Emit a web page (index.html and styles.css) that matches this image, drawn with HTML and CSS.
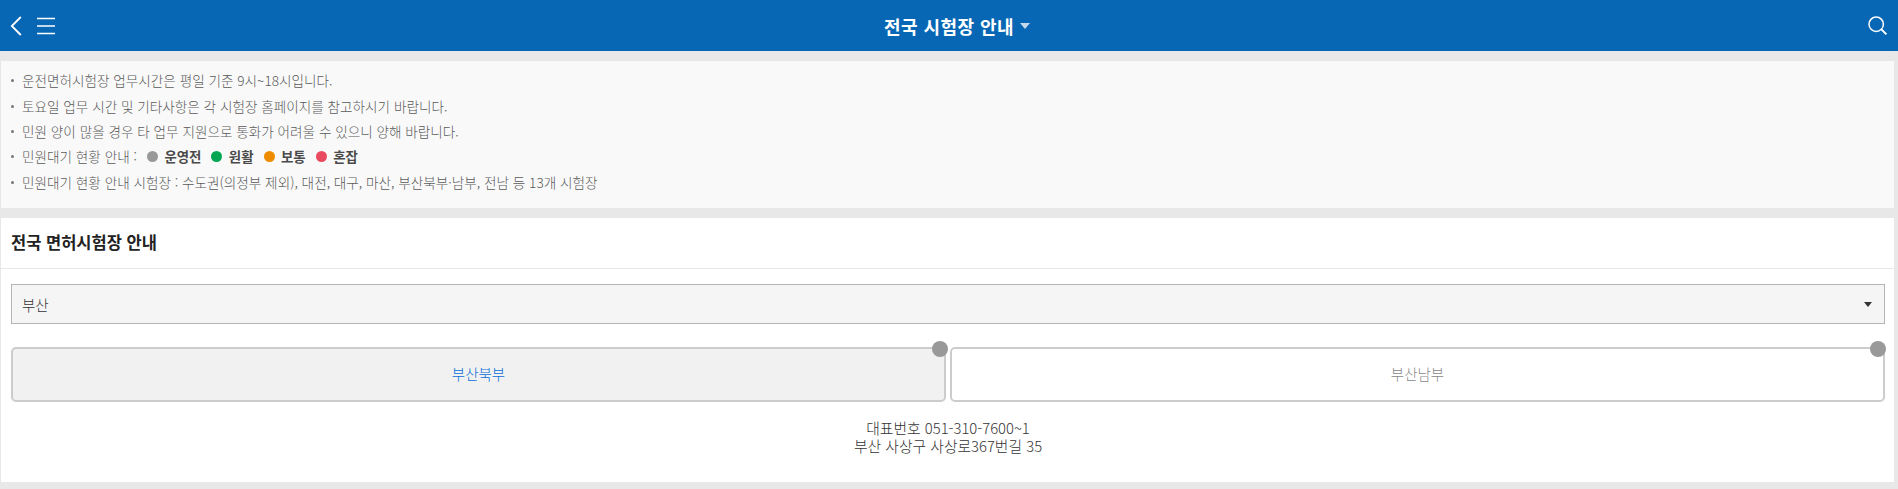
FILE: index.html
```html
<!DOCTYPE html>
<html lang="ko">
<head>
<meta charset="utf-8">
<title>전국 시험장 안내</title>
<link rel="stylesheet" href="styles.css">
</head>
<body>
<header class="topbar">
  <div class="topbar-left">
    <svg class="ico-back" width="12" height="20" viewBox="0 0 12 20"><path d="M10.8 1 1.8 10l9 9" fill="none" stroke="#fff" stroke-width="1.8"/></svg>
    <svg class="ico-menu" width="18" height="18" viewBox="0 0 18 18"><path d="M0 1.5h18M0 9h18M0 16.5h18" fill="none" stroke="#fff" stroke-width="1.5"/></svg>
  </div>
  <h1 class="topbar-title">전국 시험장 안내<span class="caret"></span></h1>
  <svg class="ico-search" width="20" height="20" viewBox="0 0 20 20"><circle cx="8.2" cy="8.2" r="7.2" fill="none" stroke="#fff" stroke-width="1.5"/><path d="m13.4 13.4 5 5" fill="none" stroke="#fff" stroke-width="2"/></svg>
</header>
<section class="notice">
  <ul>
    <li><span>운전면허시험장 업무시간은 평일 기준 9시~18시입니다.</span></li>
    <li><span>토요일 업무 시간 및 기타사항은 각 시험장 홈페이지를 참고하시기 바랍니다.</span></li>
    <li><span>민원 양이 많을 경우 타 업무 지원으로 통화가 어려울 수 있으니 양해 바랍니다.</span></li>
    <li><span>민원대기 현황 안내 :</span>
      <span class="legend"><i class="dot gray"></i><b>운영전</b></span>
      <span class="legend"><i class="dot green"></i><b>원활</b></span>
      <span class="legend"><i class="dot orange"></i><b>보통</b></span>
      <span class="legend"><i class="dot red"></i><b>혼잡</b></span>
    </li>
    <li><span>민원대기 현황 안내 시험장 : 수도권(의정부 제외), 대전, 대구, 마산, 부산북부·남부, 전남 등 13개 시험장</span></li>
  </ul>
</section>
<main class="panel">
  <h2 class="panel-title">전국 면허시험장 안내</h2>
  <div class="panel-body">
    <div class="select"><span>부산</span><i class="select-arrow"></i></div>
    <div class="tabs">
      <div class="tab active">부산북부<i class="status"></i></div>
      <div class="tab">부산남부<i class="status"></i></div>
    </div>
    <p class="info">대표번호 051-310-7600~1<br>부산 사상구 사상로367번길 35</p>
  </div>
</main>
</body>
</html>
```
FILE: styles.css
```css
* { box-sizing: border-box; }
html, body { margin: 0; height: 489px; overflow: hidden; }
body {
  background: #e8e8e8;
  font-family: "Noto Sans CJK KR", "Noto Sans", sans-serif;
  color: #555;
  padding: 0 4px 0 1px;
}
.topbar {
  height: 51px;
  margin: 0 -4px 0 -1px;
  background: #0767b5;
  display: grid;
  grid-template-columns: 1fr auto 1fr;
  align-items: center;
  padding: 0 10px 0 10px;
}
.topbar-left { display: flex; align-items: center; gap: 15px; }
.topbar-title {
  margin: 0;
  padding-left: 16px;
  font-size: 18px;
  font-weight: 700;
  color: #fff;
  letter-spacing: 0.45px;
  display: flex;
  align-items: center;
}
.caret {
  margin-left: 6px;
  border-left: 5px solid transparent;
  border-right: 5px solid transparent;
  border-top: 6px solid #c6d9ea;
}
.ico-search { justify-self: end; }
.notice {
  margin-top: 10px;
  height: 147px;
  background: #f9f9f9;
  padding: 7px 10px 0;
  font-size: 13.6px;
  font-weight: 300;
  color: #5a5a5a;
}
.notice ul { margin: 0; padding: 0; list-style: none; }
.notice li { height: 25.4px; line-height: 25px; display: flex; align-items: center; }
.notice li::before {
  content: "";
  width: 3px; height: 3px;
  border-radius: 50%;
  background: #777;
  margin-right: 8px;
  flex: none;
}
.legend { display: inline-flex; align-items: center; margin-left: 10px; color: #4a4a4a; }
.legend b { font-weight: 700; font-size: 13.4px; }
.dot { width: 11px; height: 11px; border-radius: 50%; margin-right: 6.5px; }
.gray { background: #999; }
.green { background: #00a651; }
.orange { background: #ee8c00; }
.red { background: #e84a5f; }
.panel { margin-top: 10px; height: 264px; background: #fff; }
.panel-title {
  margin: 0;
  height: 51px;
  line-height: 49px;
  padding-left: 10px;
  font-size: 16.5px;
  font-weight: 700;
  color: #222;
  border-bottom: 1px solid #e8e8e8;
}
.panel-body { padding: 15px 9px 0 10px; }
.select {
  height: 40px;
  border: 1px solid #b5b5b5;
  background: #f5f5f5;
  display: flex;
  align-items: center;
  justify-content: space-between;
  padding: 0 12px 0 10px;
  font-size: 14.5px;
  font-weight: 300;
  color: #333;
}
.select-arrow {
  border-left: 4px solid transparent;
  border-right: 4px solid transparent;
  border-top: 5px solid #333;
}
.tabs { display: flex; gap: 4px; margin-top: 23px; }
.tab {
  position: relative;
  flex: 1;
  height: 55px;
  border: 2px solid #ccc;
  border-radius: 5px;
  display: flex;
  align-items: center;
  justify-content: center;
  padding-bottom: 2px;
  font-size: 14.5px;
  font-weight: 300;
  color: #888;
  background: #fff;
}
.tab.active { background: #f1f1f1; color: #0a6fd6; }
.status {
  position: absolute;
  top: -8px;
  right: -4px;
  width: 16px;
  height: 16px;
  border-radius: 50%;
  background: #999;
}
.tab:last-child .status { right: -3px; }
.info {
  margin: 17px 0 0;
  text-align: center;
  font-size: 14.8px;
  font-weight: 300;
  line-height: 18px;
  color: #333;
}
```
